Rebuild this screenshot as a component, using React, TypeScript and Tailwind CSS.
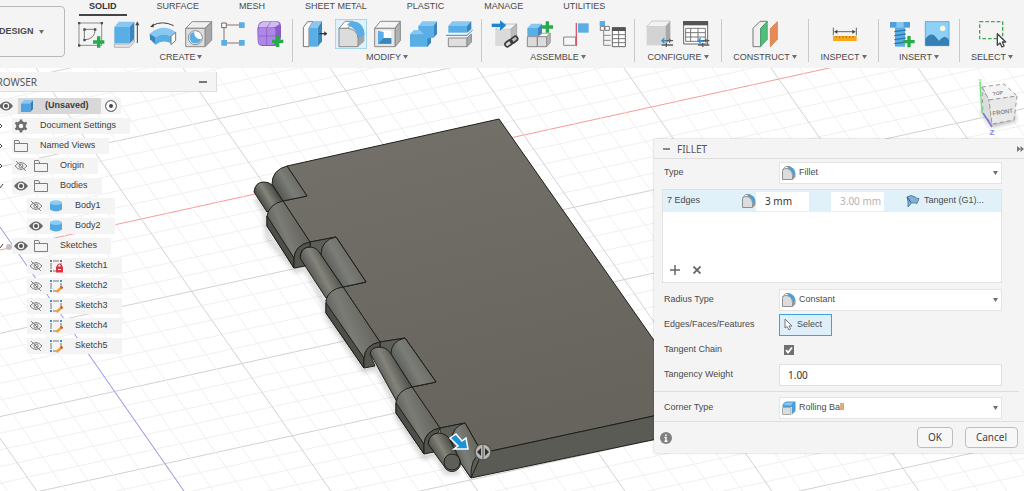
import { useState } from "react";
import type { ReactNode } from "react";
import { clsx } from "clsx";

const BLUE = "#5aaee6";
const BLUE_DARK = "#3a86bd";
const BLUE_LIGHT = "#86c8f2";

function Caret({ className }: { className?: string }) {
  return (
    <svg viewBox="0 0 5 4" className={clsx("h-1 w-[5px] shrink-0", className)} fill="#6e6e6e" aria-hidden="true">
      <path d="M0 0h5L2.5 4z" />
    </svg>
  );
}

/* ---------- toolbar icons, all drawn on an 84 unit square ---------- */

function ToolIcon({ children }: { children: ReactNode }) {
  return (
    <svg viewBox="0 0 84 84" className="h-7 w-7 overflow-visible" fill="none" strokeLinejoin="round" aria-hidden="true">
      {children}
    </svg>
  );
}

function Plus({ x, y }: { x: number; y: number }) {
  return <path d={`M${x - 17} ${y}h34M${x} ${y - 17}v34`} stroke="#27ab4b" strokeWidth="10" />;
}

function Sliders({ x, y }: { x: number; y: number }) {
  return (
    <g strokeWidth="4">
      <path d={`M${x} ${y}h34M${x} ${y + 13}h34M${x + 24} ${y - 6}v12M${x + 14} ${y + 7}v12`} stroke="#5b5b5b" />
      <path d={`M${x + 2} ${y}h12M${x + 8} ${y - 7}l-7 7l7 7`} stroke="#2c8fd6" />
    </g>
  );
}

const icons = {
  sketch: (
    <ToolIcon>
      <path d="M6 9H74V76H6z" stroke="#8d8d8d" strokeWidth="3" />
      <path d="M22 60V28H54Q56 56 22 60z" stroke="#777" strokeWidth="3" />
      <path d="M3 6h7v7H3zM71 6h7v7h-7zM3 73h7v7H3zM19 25h7v7h-7zM51 25h7v7h-7zM19 57h7v7h-7z" fill="#4d4d4d" />
      <Plus x={65} y={66} />
    </ToolIcon>
  ),
  extrude: (
    <ToolIcon>
      <path d="M4 72H50L64 58V66L50 82H4z" fill="#e4e4e4" stroke="#999" strokeWidth="2" />
      <path d="M4 21L17 5H64L50 21z" fill={BLUE_LIGHT} />
      <path d="M4 21H50V70H4z" fill={BLUE} />
      <path d="M50 21L64 5V56L50 70z" fill={BLUE_DARK} />
      <path d="M73 69V10" stroke="#444" strokeWidth="3" />
      <path d="M67 16L73 4L79 16z" fill="#444" />
    </ToolIcon>
  ),
  revolve: (
    <ToolIcon>
      <path d="M9 17Q40 0 74 17" stroke="#444" strokeWidth="3" />
      <path d="M3 21L14 10V22z" fill="#444" />
      <path d="M2 41Q42 8 80 36L66 49Q42 35 20 52z" fill={BLUE_LIGHT} />
      <path d="M2 41L20 52V74L3 58z" fill={BLUE_DARK} />
      <path d="M20 52Q42 35 66 49V70Q42 58 20 74z" fill={BLUE} />
      <path d="M66 49L80 37V62L66 74z" fill="#fff" stroke="#777" strokeWidth="3" />
    </ToolIcon>
  ),
  hole: (
    <ToolIcon>
      <path d="M2 25L22 5H80L60 25z" fill="#f0f0f0" stroke="#8b8b8b" strokeWidth="3" />
      <path d="M60 25L80 5V60L60 80z" fill="#a8a8a8" stroke="#8b8b8b" strokeWidth="3" />
      <path d="M2 25H60V80H2z" fill="#dedede" stroke="#8b8b8b" strokeWidth="3" />
      <circle cx="31" cy="53" r="21" fill="#fff" stroke="#8b8b8b" strokeWidth="3" />
      <path d="M27 35Q28 58 49 57A18 18 0 1 1 27 35z" fill={BLUE} />
    </ToolIcon>
  ),
  pattern: (
    <ToolIcon>
      <path d="M18 15H54M18 69H54M9 24V61" stroke="#8f7068" strokeWidth="3" />
      <path d="M2 9h14v14H2z" fill="#fff" stroke="#666" strokeWidth="3" />
      <path d="M54 7h17v17H54zM1 60h17v17H1zM54 60h17v17H54z" fill={BLUE} />
    </ToolIcon>
  ),
  form: (
    <ToolIcon>
      <path d="M1 26Q4 4 20 4H58Q72 4 72 18V52Q70 76 54 78H16Q2 76 2 62z" fill="#8a5ccb" />
      <path d="M4 22Q8 6 22 5H56Q66 6 68 12Q60 18 54 21H10z" fill="#d3bbf1" />
      <path d="M4 30Q4 22 12 22H46Q55 22 55 30V64Q55 75 44 75H14Q4 74 4 64z" fill="#ae88e6" />
      <path d="M29 23V75M4 48H54L71 34M29 23L42 5" stroke="#8458c4" strokeWidth="2" />
      <Plus x={62} y={64} />
    </ToolIcon>
  ),
  pressPull: (
    <ToolIcon>
      <path d="M7 22L20 5H36L24 24V80H7z" fill="#fafafa" stroke="#777" strokeWidth="3" />
      <path d="M24 24L37 3H63L50 24z" fill={BLUE_LIGHT} />
      <path d="M24 24H50V80H24z" fill={BLUE} />
      <path d="M50 24L63 3V64L50 80z" fill={BLUE_DARK} />
      <path d="M55 41H74" stroke="#333" strokeWidth="4" />
      <path d="M70 34L79 41L70 48z" fill="#333" />
    </ToolIcon>
  ),
  fillet: (
    <ToolIcon>
      <path d="M6 25L24 4H48L32 25z" fill="#fafafa" stroke="#8a8a8a" strokeWidth="3" />
      <path d="M62 54L82 42V64L63 80z" fill="#a5a5a5" />
      <path d="M30 14L42 4Q80 4 83 44L64 56Q62 26 30 14z" fill={BLUE} />
      <path d="M6 25H32Q62 28 63 56V80H6z" fill="#dcdcdc" stroke="#8a8a8a" strokeWidth="3" />
    </ToolIcon>
  ),
  shell: (
    <ToolIcon>
      <path d="M5 25L22 4H82L66 25z" fill="#f4f4f4" stroke="#8a8a8a" strokeWidth="3" />
      <path d="M66 25L82 4V62L66 80z" fill="#b1b1b1" stroke="#8a8a8a" strokeWidth="3" />
      <path d="M5 25H66V80H5z" fill="#e6e6e6" stroke="#8a8a8a" strokeWidth="3" />
      <path d="M15 32H55V71H15z" fill="#fff" />
      <path d="M15 32L32 36V54L55 58V71H15z" fill={BLUE} />
      <path d="M15 71L32 54H55V71z" fill={BLUE_DARK} />
    </ToolIcon>
  ),
  combine: (
    <ToolIcon>
      <path d="M28 18L40 4H84L73 18z" fill={BLUE_LIGHT} />
      <path d="M73 18L84 4V42L73 54z" fill={BLUE_DARK} />
      <path d="M3 43L16 30H28V18H73V54H58V80H3z" fill={BLUE} />
      <path d="M3 43L16 30H32L44 43z" fill={BLUE_LIGHT} />
      <path d="M58 54H66V68L55 80V58z" fill={BLUE_DARK} />
    </ToolIcon>
  ),
  split: (
    <ToolIcon>
      <path d="M10 17L22 4H79L66 17z" fill={BLUE_LIGHT} />
      <path d="M10 17H66V38H10z" fill={BLUE} />
      <path d="M66 17L79 4V28L66 38z" fill={BLUE_DARK} />
      <path d="M3 46H66L83 30" stroke="#2c8fd6" strokeWidth="3" />
      <path d="M10 54H66V80H10z" fill="#dedede" stroke="#8a8a8a" strokeWidth="3" />
      <path d="M66 54L79 42V66L66 80z" fill="#aaa" stroke="#8a8a8a" strokeWidth="3" />
    </ToolIcon>
  ),
  insertComponent: (
    <ToolIcon>
      <path d="M16 28L34 12H80L62 28z" fill="#f2f2f2" stroke="#aaa" strokeWidth="2" />
      <path d="M62 28L80 12V62L62 78z" fill="#bcbcbc" stroke="#999" strokeWidth="2" />
      <path d="M16 28H62V78H16z" fill="#dadada" />
      <path d="M5 16H34" stroke="#1c86d1" strokeWidth="10" />
      <path d="M30 1L49 16L30 32z" fill="#1c86d1" />
      <g stroke="#3c3c3c" strokeWidth="5">
        <rect x="44" y="63" width="24" height="14" rx="7" transform="rotate(-38 56 70)" />
        <rect x="60" y="52" width="24" height="14" rx="7" transform="rotate(-38 72 59)" />
      </g>
    </ToolIcon>
  ),
  newComponent: (
    <ToolIcon>
      <path d="M4 24L16 11H48L36 24z" fill={BLUE_LIGHT} />
      <path d="M4 24H36V48H4z" fill={BLUE} />
      <path d="M36 24L48 11V42L36 48z" fill={BLUE_DARK} />
      <path d="M36 50L48 40H73L62 50z" fill="#fafafa" stroke="#8a8a8a" strokeWidth="2" />
      <path d="M4 50H34V80H4zM34 50H62V80H34z" fill="#dcdcdc" stroke="#8a8a8a" strokeWidth="3" />
      <path d="M62 50L73 40V68L62 80z" fill="#b4b4b4" stroke="#8a8a8a" strokeWidth="2" />
      <Plus x={64} y={21} />
    </ToolIcon>
  ),
  joint: (
    <ToolIcon>
      <path d="M5 51H41V76H5z" fill="#f7f7f7" stroke="#888" strokeWidth="3" />
      <path d="M48 10H80V38H48z" fill={BLUE} />
      <path d="M43 9V78" stroke="#e05468" strokeWidth="4" />
    </ToolIcon>
  ),
  bom: (
    <ToolIcon>
      <path d="M5 3h16v15H5z" fill={BLUE} />
      <path d="M7 19h12v12H7zM21 19h13v12H21z" fill="#fff" stroke="#777" strokeWidth="3" />
      <path d="M17 33V76M17 46H38M17 61H38M17 76H38" stroke="#888" strokeWidth="3" />
      <path d="M43 23H82V80H43z" fill="#fff" stroke="#666" strokeWidth="3" />
      <path d="M42 22H83V33H42z" fill="#555" />
      <path d="M43 44H82M43 56H82M43 68H82M62 33V80" stroke="#777" strokeWidth="3" />
    </ToolIcon>
  ),
  configure: (
    <ToolIcon>
      <path d="M2 20L18 3H73L58 20z" fill="#f2f2f2" stroke="#b5b5b5" strokeWidth="2" />
      <path d="M58 20L73 3V58L58 76z" fill="#a9a9a9" />
      <path d="M2 20H58V76H2z" fill="#d3d3d3" />
      <Sliders x={47} y={62} />
    </ToolIcon>
  ),
  configTable: (
    <ToolIcon>
      <path d="M5 5H77V72H5z" fill="#fff" stroke="#666" strokeWidth="3" />
      <path d="M3 3H78V16H3z" fill="#555" />
      <path d="M11 25H70V64H11zM11 38H70M11 51H70M26 25V64M48 25V64" stroke="#777" strokeWidth="3" />
      <Sliders x={48} y={62} />
    </ToolIcon>
  ),
  construct: (
    <ToolIcon>
      <path d="M6 25L27 4H49L29 25V80H6z" fill="#f0f0f0" stroke="#777" strokeWidth="3" />
      <path d="M29 25L49 5V58L29 80z" fill="#4fc07b" stroke="#3a9c60" strokeWidth="2" />
      <path d="M58 26L79 5V58L58 80z" fill="#ea8a52" stroke="#c96f3b" strokeWidth="2" />
    </ToolIcon>
  ),
  inspect: (
    <ToolIcon>
      <path d="M10 23V46M79 23V46M16 35H73" stroke="#666" strokeWidth="3" />
      <path d="M12 35L22 29V41zM77 35L67 29V41z" fill="#444" />
      <path d="M9 48H80V63H9z" fill="#f7a81b" />
      <path d="M19 48V54M29 48V54M39 48V54M49 48V54M59 48V54M69 48V54" stroke="#8d5c08" strokeWidth="2" />
    </ToolIcon>
  ),
  fastener: (
    <ToolIcon>
      <path d="M9 6H69V23H9z" fill="#4f9fd8" />
      <path d="M28 6H50V23H28z" fill={BLUE_LIGHT} />
      <path d="M24 23H54V80H24z" fill={BLUE} />
      <path d="M22 35L56 30M22 47L56 42M22 59L56 54M22 71L56 66" stroke="#2f76ab" strokeWidth="4" />
      <Plus x={66} y={65} />
    </ToolIcon>
  ),
  canvas: (
    <ToolIcon>
      <path d="M7 5H78V77H7z" fill="#8fd0f7" stroke={BLUE} strokeWidth="3" />
      <path d="M7 56Q24 34 38 50L48 62Q60 50 66 50Q74 52 78 60V77H7z" fill="#357fb5" />
      <circle cx="59" cy="25" r="8" fill="#fdfbd9" />
    </ToolIcon>
  ),
  select: (
    <ToolIcon>
      <path d="M5 5H74V56H5z" stroke="#3da95b" strokeWidth="4" strokeDasharray="11 6" />
      <path d="M58 41V76L66 69L72 81L78 78L73 66H83z" fill="#fff" stroke="#444" strokeWidth="4" />
    </ToolIcon>
  ),
};

type IconName = keyof typeof icons;

const tabs = ["SOLID", "SURFACE", "MESH", "SHEET METAL", "PLASTIC", "MANAGE", "UTILITIES"];

const groups: { label: string; width: string; tools: IconName[] }[] = [
  { label: "CREATE", width: "w-[223px]", tools: ["sketch", "extrude", "revolve", "hole", "pattern", "form"] },
  { label: "MODIFY", width: "w-[189px]", tools: ["pressPull", "fillet", "shell", "combine", "split"] },
  { label: "ASSEMBLE", width: "w-[153px]", tools: ["insertComponent", "newComponent", "joint", "bom"] },
  { label: "CONFIGURE", width: "w-[87px]", tools: ["configure", "configTable"] },
  { label: "CONSTRUCT", width: "w-[87px]", tools: ["construct"] },
  { label: "INSPECT", width: "w-[70px]", tools: ["inspect"] },
  { label: "INSERT", width: "w-[81px]", tools: ["fastener", "canvas"] },
  { label: "SELECT", width: "w-16", tools: ["select"] },
];

function Toolbar() {
  const [tab, setTab] = useState("SOLID");

  return (
    <header className="relative z-10 flex h-[68px] shrink-0 bg-[#f4f4f4] text-[#4a4a4a]">
      <button className="mt-[6px] -ml-2 flex h-[51px] w-[73px] shrink-0 items-center gap-[5px] rounded border border-[#b9b9b9] pl-[6px] font-bold">
        DESIGN
        <Caret />
      </button>
      <div className="ml-[5px] min-w-0">
        <nav className="ml-[9px] flex h-4 gap-5">
          {tabs.map((name) => (
            <button
              key={name}
              onClick={() => setTab(name)}
              className={clsx(
                "h-4 border-b-2 px-[10px] pb-[2px] leading-3 whitespace-nowrap",
                tab === name ? "border-[#444] font-bold text-[#333]" : "border-transparent"
              )}
            >
              {name}
            </button>
          ))}
        </nav>
        <div className="mt-[3px] flex">
          {groups.map((group) => (
            <section
              key={group.label}
              className={clsx("flex h-[43px] shrink-0 flex-col border-r border-[#c9c9c9] last:border-r-0", group.width)}
            >
              <div className="flex justify-center">
                {group.tools.map((tool) => (
                  <button
                    key={tool}
                    aria-label={tool}
                    className={clsx(
                      "mx-[2px] flex h-[30px] w-8 items-center justify-center border",
                      tool === "fillet" ? "border-[#a5d8f0] bg-[#dff1fa]" : "border-transparent"
                    )}
                  >
                    {icons[tool]}
                  </button>
                ))}
              </div>
              <button className="mt-[2px] flex items-center justify-center gap-[2px] leading-3">
                {group.label}
                <Caret />
              </button>
            </section>
          ))}
        </div>
      </div>
    </header>
  );
}

/* ---------- browser tree ---------- */

function Eye() {
  return (
    <svg viewBox="0 0 14 10" className="h-[10px] w-[14px]" aria-hidden="true">
      <path d="M0 5Q7-4 14 5Q7 14 0 5z" fill="#666" />
      <circle cx="7" cy="5" r="3.2" fill="#f4f4f4" />
      <circle cx="7" cy="5" r="2" fill="#555" />
    </svg>
  );
}

function EyeOff() {
  return (
    <svg viewBox="0 0 14 12" className="h-3 w-[14px]" fill="none" stroke="#808080" aria-hidden="true">
      <path d="M1 6Q7-1 13 6Q7 13 1 6z" />
      <circle cx="7" cy="6" r="2" />
      <path d="M2 1L12 11" />
    </svg>
  );
}

function Folder() {
  return (
    <svg viewBox="0 0 14 12" className="h-3 w-[14px]" fill="none" stroke="#7c7c7c" aria-hidden="true">
      <path d="M.5 3.5H13.5V11.5H.5zM.5 3.5V.5H4.5L6 3.5" />
    </svg>
  );
}

function Gear() {
  return (
    <svg viewBox="0 0 14 14" className="h-[14px] w-[14px]" aria-hidden="true">
      <g stroke="#6c6c6c" fill="none">
        <circle cx="7" cy="7" r="3.6" strokeWidth="2.6" />
        <path
          d="M7 .5V3M7 11V13.5M1.4 3.7L3.5 5M10.5 9L12.6 10.3M1.4 10.3L3.5 9M10.5 5L12.6 3.7"
          strokeWidth="2.6"
        />
      </g>
    </svg>
  );
}

function Cube() {
  return (
    <svg viewBox="0 0 14 14" className="h-[14px] w-[14px]" aria-hidden="true">
      <path d="M1 4.5L4 1H13L10.5 4.5z" fill={BLUE_LIGHT} />
      <path d="M1 4.5H10.5V13H1z" fill="#4ea3e0" />
      <path d="M10.5 4.5L13 1V10L10.5 13z" fill="#3580b8" />
    </svg>
  );
}

function Cylinder() {
  return (
    <svg viewBox="0 0 12 12" className="h-3 w-3" aria-hidden="true">
      <path d="M0 2.5V9.5Q6 13.5 12 9.5V2.5z" fill="#55a9e2" />
      <ellipse cx="6" cy="2.6" rx="6" ry="2.3" fill="#8accf4" />
    </svg>
  );
}

function SketchMark({ locked }: { locked?: boolean }) {
  return (
    <svg viewBox="0 0 14 14" className="h-[14px] w-[14px]" fill="none" aria-hidden="true">
      <path d="M4 2H10M2 4V10M4 12H8M12 4V8" stroke="#777" />
      <path d="M1 1h2v2H1zM11 1h2v2h-2zM1 11h2v2H1z" fill={locked ? "#777" : "#3f8fd2"} />
      {locked ? (
        <>
          <path d="M8.5 8V6.5Q10.5 3.5 12.5 6.5V8" stroke="#d22f3a" strokeWidth="1.2" />
          <path d="M7 7.5H14V13.5H7z" fill="#dc3440" />
          <path d="M9 10.5h3" stroke="#fff" />
        </>
      ) : (
        <>
          <path d="M7.5 13L12.5 8.5" stroke="#f2a12d" strokeWidth="2.6" />
          <path d="M11.8 9.2L13.5 7.6" stroke="#e0503c" strokeWidth="2.6" />
        </>
      )}
    </svg>
  );
}

interface TreeNode {
  label: string;
  indent: string;
  icon: ReactNode;
  eye?: "on" | "off";
  caret?: "open" | "closed";
}

const tree: TreeNode[] = [
  { label: "Document Settings", indent: "pl-3", icon: <Gear />, caret: "closed" },
  { label: "Named Views", indent: "pl-3", icon: <Folder />, caret: "closed" },
  { label: "Origin", indent: "pl-3", icon: <Folder />, eye: "off", caret: "closed" },
  { label: "Bodies", indent: "pl-3", icon: <Folder />, eye: "on", caret: "open" },
  { label: "Body1", indent: "pl-[27px]", icon: <Cylinder />, eye: "off" },
  { label: "Body2", indent: "pl-[27px]", icon: <Cylinder />, eye: "on" },
  { label: "Sketches", indent: "pl-3", icon: <Folder />, eye: "on", caret: "open" },
  { label: "Sketch1", indent: "pl-[27px]", icon: <SketchMark locked />, eye: "off" },
  { label: "Sketch2", indent: "pl-[27px]", icon: <SketchMark />, eye: "off" },
  { label: "Sketch3", indent: "pl-[27px]", icon: <SketchMark />, eye: "off" },
  { label: "Sketch4", indent: "pl-[27px]", icon: <SketchMark />, eye: "off" },
  { label: "Sketch5", indent: "pl-[27px]", icon: <SketchMark />, eye: "off" },
];

function Slot({ children }: { children: ReactNode }) {
  return <span className="flex w-[18px] shrink-0 items-center justify-center">{children}</span>;
}

function TreeRow({ node }: { node: TreeNode }) {
  return (
    <li className={clsx("relative flex h-5 items-center", node.indent)}>
      {node.caret && (
        <svg viewBox="0 0 8 8" className="absolute top-[6px] -left-1 h-2 w-2" fill="none" stroke="#444" aria-hidden="true">
          <path d={node.caret === "open" ? "M1 2L4 6L7 2" : "M3 1L6 4L3 7"} />
        </svg>
      )}
      <div className="flex h-4 items-center gap-[2px] bg-[#f4f4f4] pr-[14px]">
        {node.eye && <Slot>{node.eye === "on" ? <Eye /> : <EyeOff />}</Slot>}
        <Slot>{node.icon}</Slot>
        <span className="pl-2 whitespace-nowrap">{node.label}</span>
      </div>
    </li>
  );
}

function BrowserPanel() {
  return (
    <aside className="relative w-[217px] pt-1 text-[#3c3c3c]">
      <div className="flex h-5 items-center justify-between border-r border-b border-[#dcdcdc] bg-[#f4f4f4] pr-[9px]">
        <h2 className="-ml-[10px] pt-px font-['Noto_Sans',sans-serif] text-[10px] text-[#555]">BROWSER</h2>
        <button aria-label="Collapse browser" className="h-[2px] w-2 bg-[#777]" />
      </div>
      <ul className="pt-1">
        <li className="flex h-5 items-center">
          <div className="-ml-[3px] flex h-4 items-center bg-[#f4f4f4] pr-1">
            <Slot>
              <Eye />
            </Slot>
            <div className="ml-[3px] flex h-4 items-center bg-[#d8d8d8] pr-3 font-bold">
              <Slot>
                <Cube />
              </Slot>
              <span className="pl-[9px]">(Unsaved)</span>
            </div>
            <input
              type="radio"
              name="active-component"
              defaultChecked
              aria-label="Activate (Unsaved)"
              className="ml-1 h-3 w-3 appearance-none rounded-full border border-[#777] bg-[#42425a] shadow-[inset_0_0_0_3px_#fff]"
            />
          </div>
        </li>
        {tree.map((node) => (
          <TreeRow key={node.label} node={node} />
        ))}
      </ul>
    </aside>
  );
}

/* ---------- fillet dialog ---------- */

function FilletMark() {
  return (
    <svg viewBox="0 0 14 14" className="h-[14px] w-[14px]" aria-hidden="true">
      <path d="M.5 4L3.5.5H8L6 4z" fill="#fff" stroke="#999" />
      <path d="M5 2L7 .5Q13 1 13.5 8L11 11Q11 4 5 2z" fill="#4a9fd8" />
      <path d="M.5 4.5Q2 2 5 2.5Q10.5 4 10.5 9.5V13.5H.5z" fill="#dcdcdc" stroke="#8f8f8f" />
      <path d="M11 10L13.5 8V11L11 13.5z" fill="#999" />
    </svg>
  );
}

function RollingBallMark() {
  return (
    <svg viewBox="0 0 14 14" className="h-[14px] w-[14px]" aria-hidden="true">
      <path d="M.5 4Q2 .5 5 .5H13.5V10L10 13.5V6H.5z" fill="#4a9fd8" />
      <path d="M1 4Q3 1.5 5 1.5H11L9 4.5z" fill={BLUE_LIGHT} />
      <path d="M.5 6.5H9V13.5H.5z" fill="#dcdcdc" stroke="#aaa" />
    </svg>
  );
}

function DropDown({ id, icon, options }: { id: string; icon: ReactNode; options: string[] }) {
  return (
    <div className="relative">
      <span className="pointer-events-none absolute top-1 left-[3px]">{icon}</span>
      <select id={id} className="h-[22px] w-full appearance-none border border-[#e4e4e4] bg-white pr-4 pl-[19px] outline-none">
        {options.map((option) => (
          <option key={option}>{option}</option>
        ))}
      </select>
      <Caret className="pointer-events-none absolute top-[9px] right-1" />
    </div>
  );
}

function Field({ label, htmlFor, children }: { label: string; htmlFor: string; children: ReactNode }) {
  return (
    <div className="grid h-[25px] grid-cols-[115px_1fr] items-center pr-[22px] pl-[10px]">
      <label htmlFor={htmlFor}>{label}</label>
      {children}
    </div>
  );
}

const valueText = "font-['Noto_Sans',sans-serif] text-[10px]";

function FilletPanel() {
  const [chain, setChain] = useState(true);

  return (
    <form
      onSubmit={(e) => e.preventDefault()}
      className="absolute top-[71px] right-0 w-[370px] bg-[#f4f4f4] text-[#4a4a4a] shadow-[0_0_2px_rgba(0,0,0,0.25)]"
    >
      <div className="flex h-5 items-center border-b border-[#dedede] pl-[9px]">
        <button type="button" aria-label="Collapse" className="h-[2px] w-[7px] bg-[#888]" />
        <h2 className={clsx("ml-[7px] grow pt-px text-[#555]", valueText)}>FILLET</h2>
        <svg viewBox="0 0 7 6" className="h-[6px] w-[7px]" fill="#777" aria-hidden="true">
          <path d="M0 0L3.5 3L0 6zM3.5 0L7 3L3.5 6z" />
        </svg>
      </div>

      <div className="pt-px">
        <Field label="Type" htmlFor="type">
          <DropDown id="type" icon={<FilletMark />} options={["Fillet", "Rule Fillet", "Full Round Fillet"]} />
        </Field>
      </div>

      <div className="mt-1 mr-[22px] mb-1 ml-2 h-[94px] border border-[#e2e2e2] bg-white">
        <div className="flex h-[22px] items-center bg-[#e1f1f9] pl-1">
          <span className="w-[75px]">7 Edges</span>
          <FilletMark />
          <input
            aria-label="Radius"
            defaultValue="3 mm"
            className={clsx("h-[19px] w-[53px] bg-white pl-[9px] text-[#333] outline-none", valueText)}
          />
          <input
            aria-label="Tangency radius"
            defaultValue="3.00 mm"
            disabled
            className={clsx("ml-[22px] h-[19px] w-[53px] bg-white pl-[9px] text-[#b4b4b4]", valueText)}
          />
          <button type="button" className="ml-[22px] flex items-center gap-1 whitespace-nowrap">
            <svg viewBox="0 0 14 14" className="h-[14px] w-[14px]" aria-hidden="true">
              <path d="M1 3Q5 0 9 3Q11 5 13 4.5L11 9.5Q8 8.5 5.5 9L2 13V8z" fill="#7fb0da" stroke="#5b7f9e" />
              <path d="M1 3L5 8.5" stroke="#38546e" fill="none" />
            </svg>
            Tangent (G1)...
          </button>
        </div>
        <div className="mt-[52px] flex items-center gap-3 pl-[6px]">
          <button type="button" aria-label="Add selection set">
            <svg viewBox="0 0 12 12" className="h-3 w-3" stroke="#666" strokeWidth="1.5" aria-hidden="true">
              <path d="M6 1V11M1 6H11" />
            </svg>
          </button>
          <button type="button" aria-label="Remove selection set">
            <svg viewBox="0 0 8 8" className="h-2 w-2" stroke="#666" strokeWidth="1.8" aria-hidden="true">
              <path d="M.5.5L7.5 7.5M7.5.5L.5 7.5" />
            </svg>
          </button>
        </div>
      </div>

      <Field label="Radius Type" htmlFor="radius-type">
        <DropDown id="radius-type" icon={<FilletMark />} options={["Constant", "Variable", "Chord Length"]} />
      </Field>
      <Field label="Edges/Faces/Features" htmlFor="edges">
        <button
          id="edges"
          type="button"
          className="flex h-[22px] w-[53px] items-center gap-1 border border-[#3ba3df] bg-[#deeffa] pl-1"
        >
          <svg viewBox="0 0 9 13" className="h-[13px] w-[9px]" fill="#fff" stroke="#777" aria-hidden="true">
            <path d="M1 1V10L3 8.5L5 12L6.5 11L5 8H8z" />
          </svg>
          Select
        </button>
      </Field>
      <Field label="Tangent Chain" htmlFor="chain">
        <span className="relative ml-[5px] flex h-[10px] w-[10px]">
          <input
            id="chain"
            type="checkbox"
            checked={chain}
            onChange={(e) => setChain(e.target.checked)}
            className="h-[10px] w-[10px] appearance-none border border-[#707070] bg-white checked:bg-[#707070]"
          />
          <svg
            viewBox="0 0 10 10"
            className="pointer-events-none absolute inset-0 h-[10px] w-[10px]"
            fill="none"
            stroke="#fff"
            strokeWidth="1.8"
            aria-hidden="true"
          >
            <path d="M2 5L4 7.5L8 2.5" />
          </svg>
        </span>
      </Field>
      <Field label="Tangency Weight" htmlFor="weight">
        <input
          id="weight"
          defaultValue="1.00"
          className={clsx("h-[22px] w-full min-w-0 border border-[#e0e0e0] bg-white pl-2 text-[#333] outline-none", valueText)}
        />
      </Field>

      <div className="mt-1 mr-[5px] border-t border-[#dedede] pt-[3px]">
        <div className="-mr-[5px]">
          <Field label="Corner Type" htmlFor="corner">
            <DropDown id="corner" icon={<RollingBallMark />} options={["Rolling Ball", "Setback"]} />
          </Field>
        </div>
      </div>

      <div
        className={clsx(
          "mt-px flex h-8 items-center gap-3 border-t border-[#dedede] pr-[6px] pl-[6px] text-[#444]",
          valueText
        )}
      >
        <svg viewBox="0 0 12 12" className="mr-auto h-3 w-3" aria-hidden="true">
          <circle cx="6" cy="6" r="6" fill="#808080" />
          <path d="M6 2.2V4M4.5 5.5H6V9M4.5 9.2H7.5" stroke="#fff" strokeWidth="1.4" fill="none" />
        </svg>
        <button type="submit" className="h-[21px] w-9 rounded-sm border border-[#bdbdbd] bg-[#f7f7f7]">
          OK
        </button>
        <button type="button" className="h-[21px] w-[53px] rounded-sm border border-[#bdbdbd] bg-[#f7f7f7]">
          Cancel
        </button>
      </div>
    </form>
  );
}

/* ---------- modelling canvas ---------- */

// The grid is a sheared lattice: every fifth line is a major one.
const GRID_WIDTH = 2400;

function Grid() {
  const rows = Array.from({ length: 96 }, (_, i) => i - 20);
  const cols = Array.from({ length: 110 }, (_, i) => i - 30);
  return (
    <g fill="none" strokeWidth="1">
      {rows.map((i) => {
        const y = 250 + i * 16.66;
        return (
          <path
            key={`r${i}`}
            d={`M0 ${y}L${GRID_WIDTH} ${y - GRID_WIDTH * 0.2195}`}
            stroke={i === 0 ? "#f79a9a" : i % 5 === 0 ? "#d2d2d2" : "#f0f0f0"}
          />
        );
      })}
      {cols.map((i) => {
        const x = 36 + i * 29.4;
        return (
          <path
            key={`c${i}`}
            d={`M${x} 68L${x + 1394} 2068`}
            stroke={i % 5 === 0 ? "#d2d2d2" : "#f0f0f0"}
          />
        );
      })}
      <path d="M0 227L184 491L281 630" stroke="#9c9cf5" />
    </g>
  );
}

const knuckles = [
  {
    top: "M283 201L310 242Q295 245 294 259L294 268L267 226V216Q269 204 283 201z",
    side: "M267 216V226L294 268V258z",
    end: "M310 242Q295 245 294 258V268L305 266L300 258Q300 247 310 247z",
  },
  {
    top: "M343 287L380 342Q365 345 364 358V368L326 313V300Q329 289 343 287z",
    side: "M326 303V313L364 368V358z",
    end: "M380 342Q365 345 364 358V368L375 366L370 354Q371 347 380 347z",
  },
  {
    top: "M412 387L440 428Q425 431 424 444V454L396 413V402Q398 390 412 387z",
    side: "M396 403V413L424 454V444z",
    end: "M440 428Q425 431 424 444V454L434 452L428 444Q429 434 438 433z",
  },
];

function Hinge() {
  return (
    <g stroke="#1f1f1c" strokeLinejoin="round">
      <path
        d="M256 198L266 214L268 238L296 270L306 268L326 306L328 318L364 370L377 368L396 404L398 418L424 457L436 454L446 472L460 472"
        fill="none"
        stroke="#000"
        strokeOpacity="0.15"
        strokeWidth="6"
        filter="url(#soft)"
      />
      {/* plate, with the notches left open for the recesses */}
      <path
        d="M287 166L499 119L700 406L482 453L465 423L440 428L412 387L436 382L405 338L380 342L343 287L366 282L336 237L310 242L283 201L307 196z"
        fill="url(#plate)"
      />
      <path d="M482 453L700 406V430L471 478L470 470Q471 457 482 453z" fill="#5b5b55" />

      <path d="M310 242L336 237L366 282L343 287L312 262z" fill="#5e5e58" />
      <path d="M380 342L405 338L436 382L412 387L382 362z" fill="#5e5e58" />
      <path d="M440 428L465 423L482 453L471 478L460 462L440 445z" fill="#5e5e58" />

      {/* pin and barrels */}
      <path d="M254 192Q255 182 264 182Q269 182 272 185L283 201L267 212z" fill="url(#pin)" />
      <path d="M287 166L307 196L283 201L272 184Q272 170 287 166z" fill="url(#barrel)" />
      <path d="M336 237L366 282L343 287L321 255Q321 240 336 237z" fill="url(#barrel)" />
      <path d="M405 338L436 382L412 387L391 354Q391 341 405 338z" fill="url(#barrel)" />
      <path d="M465 423L482 453Q470 457 471 478L460 462L451 440Q453 426 465 423z" fill="url(#barrel)" />

      <path d="M300 258Q301 247 310 247Q317 247 321 255L343 287L326 298z" fill="url(#pin)" />
      <path d="M370 353Q371 347 379 347Q387 347 391 354L412 387L397 402z" fill="url(#pin)" />
      <path d="M428 444Q429 434 437 433Q445 433 449 438L460 460A8 8 0 0 1 444 466z" fill="url(#pin)" />
      <circle cx="452" cy="462" r="8" fill="#5f5f59" />

      {knuckles.map((part) => (
        <g key={part.top}>
          <path d={part.top} fill="url(#knuckle)" />
          <path d={part.side} fill="#4e4e49" />
          <path d={part.end} fill="#54544f" />
        </g>
      ))}
    </g>
  );
}

function Manipulator() {
  return (
    <g>
      <path d="M450 438L456 434L462 441L466 438L468 449L454 449L458 446z" fill="#1b93d6" stroke="#fff" strokeWidth="1.5" />
      <circle cx="483" cy="452" r="8" fill="#b9b9b7" stroke="#55554f" strokeWidth="1.5" />
      <path d="M483 445V459" stroke="#555" />
      <path d="M481 448V456L477 452zM485 448V456L489 452z" fill="#2c2c2c" />
    </g>
  );
}

function ViewCube() {
  return (
    <g strokeLinejoin="round">
      <path d="M980 110L992 127L1016 121L1014 112z" fill="#000" fillOpacity="0.3" filter="url(#soft)" />
      <path d="M982 87L1004 84L1017 96L989 100z" fill="#f4f4f4" stroke="#9a9a9a" strokeDasharray="4 3" />
      <path d="M982 87L989 100L992 124L983 113z" fill="#dcdcdc" stroke="#9a9a9a" strokeDasharray="4 3" />
      <path d="M989 100L1017 96L1014 120L992 124z" fill="#e9e9e9" stroke="#9a9a9a" strokeDasharray="4 3" />
      <path d="M980 82L982 113" stroke="#6fe37d" strokeWidth="1.5" />
      <path d="M983 113L992 127" stroke="#7a76dd" strokeWidth="1.5" />
      <g className="font-['Liberation_Sans',sans-serif] font-bold" textAnchor="middle">
        <text x="998" y="95" fontSize="5" fill="#8c8c8c" transform="rotate(-8 998 95)">
          TOP
        </text>
        <text x="1003" y="114" fontSize="6" fill="#8c8c8c" transform="rotate(-8 1003 114)">
          FRONT
        </text>
        <text x="980" y="83" fontSize="6" fill="#8fe79a">
          Y
        </text>
        <text x="992" y="135" fontSize="8" fill="#8a86e8">
          Z
        </text>
      </g>
    </g>
  );
}

function Viewport() {
  return (
    <svg className="absolute inset-0 h-full w-full" role="img" aria-label="Hinge model">
      <defs>
        <linearGradient id="plate" x1="0" y1="0" x2="0.3" y2="1">
          <stop offset="0" stopColor="#73716a" />
          <stop offset="1" stopColor="#66645c" />
        </linearGradient>
        <linearGradient id="barrel" x1="0" y1="0.65" x2="0.75" y2="0.2">
          <stop offset="0" stopColor="#4b4c47" />
          <stop offset="0.5" stopColor="#7b7d78" />
          <stop offset="1" stopColor="#66655e" />
        </linearGradient>
        <linearGradient id="knuckle" x1="0.1" y1="0.7" x2="0.75" y2="0.3">
          <stop offset="0" stopColor="#50514c" />
          <stop offset="0.5" stopColor="#7b7c76" />
          <stop offset="1" stopColor="#66655e" />
        </linearGradient>
        <linearGradient id="pin" x1="0.2" y1="0.65" x2="0.75" y2="0.3">
          <stop offset="0" stopColor="#4a4a45" />
          <stop offset="0.5" stopColor="#84847c" />
          <stop offset="1" stopColor="#4c4c47" />
        </linearGradient>
        <filter id="soft">
          <feGaussianBlur stdDeviation="2" />
        </filter>
      </defs>
      <g transform="translate(0 -68)">
        <Grid />
        <circle cx="9" cy="247" r="3" fill="#c2c2c2" />
        <Hinge />
        <Manipulator />
        <ViewCube />
      </g>
    </svg>
  );
}

export default function App() {
  return (
    <div className="flex min-h-screen flex-col overflow-hidden bg-white font-['Liberation_Sans',Arial,sans-serif] text-[9px]">
      <Toolbar />
      <main className="relative grow">
        <Viewport />
        <BrowserPanel />
        <FilletPanel />
      </main>
    </div>
  );
}
